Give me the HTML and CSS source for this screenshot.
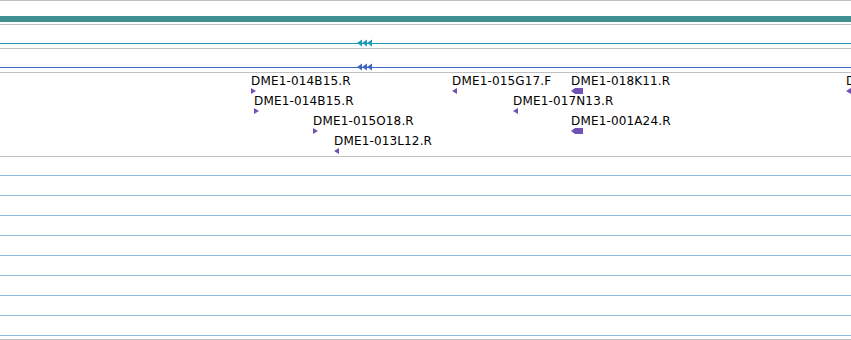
FILE: index.html
```html
<!doctype html>
<html>
    <head>
        <meta charset="UTF-8" />
        <title>Track view</title>
        <link rel="stylesheet" href="styles.css">
    </head>
    <body>
        <div class="tracks">
            <!-- Ruler band -->
            <div class="track track-ruler">
                <div class="band"></div>
            </div>

            <!-- Alignment lines -->
            <div class="track track-line">
                <div class="line line-cyan">
                    <svg class="arrows" viewBox="0 0 16 8">
                        <polygon fill="#1f9ab4" points="0,4 5,0.5 5,7.5" />
                        <polygon fill="#1f9ab4" points="5,4 10,0.5 10,7.5" />
                        <polygon fill="#1f9ab4" points="10,4 15,0.5 15,7.5" />
                    </svg>
                </div>
            </div>
            <div class="track track-line">
                <div class="line line-blue">
                    <svg class="arrows" viewBox="0 0 16 8">
                        <polygon fill="#3d68c4" points="0,4 5,0.5 5,7.5" />
                        <polygon fill="#3d68c4" points="5,4 10,0.5 10,7.5" />
                        <polygon fill="#3d68c4" points="10,4 15,0.5 15,7.5" />
                    </svg>
                </div>
            </div>

            <!-- BAC end features -->
            <div class="track track-features">
                <div class="feature" style="left: 251px; top: 1px">
                    <span class="label">DME1-014B15.R</span>
                    <svg class="mark" viewBox="0 0 6 6"><polygon points="0,0 5,3 0,6" /></svg>
                </div>
                <div class="feature" style="left: 254px; top: 21px">
                    <span class="label">DME1-014B15.R</span>
                    <svg class="mark" viewBox="0 0 6 6"><polygon points="0,0 5,3 0,6" /></svg>
                </div>
                <div class="feature" style="left: 313px; top: 41px">
                    <span class="label">DME1-015O18.R</span>
                    <svg class="mark" viewBox="0 0 6 6"><polygon points="0,0 5,3 0,6" /></svg>
                </div>
                <div class="feature" style="left: 334px; top: 61px">
                    <span class="label">DME1-013L12.R</span>
                    <svg class="mark" viewBox="0 0 6 6"><polygon points="0,3 5,0 5,6" /></svg>
                </div>
                <div class="feature" style="left: 452px; top: 1px">
                    <span class="label">DME1-015G17.F</span>
                    <svg class="mark" viewBox="0 0 6 6"><polygon points="0,3 5,0 5,6" /></svg>
                </div>
                <div class="feature" style="left: 513px; top: 21px">
                    <span class="label">DME1-017N13.R</span>
                    <svg class="mark" viewBox="0 0 6 6"><polygon points="0,3 5,0 5,6" /></svg>
                </div>
                <div class="feature" style="left: 571px; top: 1px">
                    <span class="label">DME1-018K11.R</span>
                    <svg class="mark wide" viewBox="0 0 12 6"><polygon points="0,3 4,0 12,0 12,6 4,6" /></svg>
                </div>
                <div class="feature" style="left: 571px; top: 41px">
                    <span class="label">DME1-001A24.R</span>
                    <svg class="mark wide" viewBox="0 0 12 6"><polygon points="0,3 4,0 12,0 12,6 4,6" /></svg>
                </div>
                <div class="feature" style="left: 846px; top: 1px">
                    <span class="label">DME1-016C03.R</span>
                    <svg class="mark" viewBox="0 0 6 6"><polygon points="0,3 5,0 5,6" /></svg>
                </div>
            </div>

            <!-- Empty rows -->
            <div class="rows">
                <div class="row"></div>
                <div class="row"></div>
                <div class="row"></div>
                <div class="row"></div>
                <div class="row"></div>
                <div class="row"></div>
                <div class="row"></div>
                <div class="row"></div>
                <div class="row short"></div>
            </div>
        </div>
    </body>
</html>
```

FILE: styles.css
```css
body {
    font-family: "DejaVu Sans", "Liberation Sans", sans-serif;
    font-size: 12px;
    margin: 0;
    padding: 0;
    background-color: #ffffff;
    color: #000000;
    width: 851px;
    height: 340px;
    overflow: hidden;
}

.tracks {
    border-top: 1px solid #c0c0c0;
}

.track {
    border-bottom: 1px solid #c0c0c0;
}

.track-ruler {
    height: 8px;
    padding-top: 15px;
}

.band {
    height: 6px;
    background-color: #409090;
}

.track-line {
    height: 5px;
    padding-top: 18px;
}

.line {
    position: relative;
    height: 1px;
}

.line-cyan {
    background-color: #1f9ab4;
}

.line-blue {
    background-color: #3d68c4;
}

.arrows {
    position: absolute;
    left: 357px;
    top: -4px;
    width: 16px;
    height: 8px;
}

.track-features {
    position: relative;
    height: 83px;
    overflow: hidden;
}

.feature {
    position: absolute;
    display: flex;
    flex-direction: column;
    align-items: flex-start;
}

.label {
    line-height: 14px;
    letter-spacing: 0.15px;
    white-space: nowrap;
}

.mark {
    width: 6px;
    height: 6px;
    fill: #7052b6;
}

.mark.wide {
    width: 12px;
}

.rows {
    padding-top: 18px;
}

.row {
    height: 19px;
    border-top: 1px solid #8fbcdc;
}

.row.short {
    height: 3px;
    border-bottom: 1px solid #c0c0c0;
}
```
